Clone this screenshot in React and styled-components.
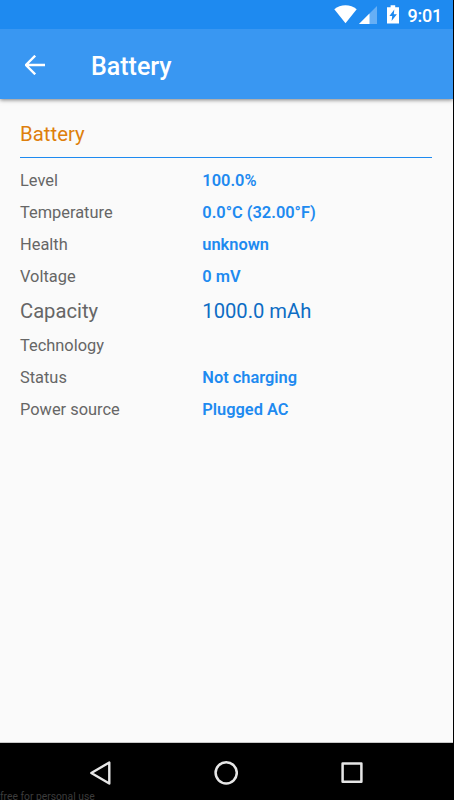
import React from "react"
import styled, { createGlobalStyle } from "styled-components"

const readings = [
  { label: "Level", value: "100.0%" },
  { label: "Temperature", value: "0.0°C (32.00°F)" },
  { label: "Health", value: "unknown" },
  { label: "Voltage", value: "0 mV" },
  { label: "Capacity", value: "1000.0 mAh", large: true },
  { label: "Technology", value: "" },
  { label: "Status", value: "Not charging" },
  { label: "Power source", value: "Plugged AC" },
]

const App = () => (
  <Device>
    <GlobalStyle />
    <Screen>
      <StatusBar>
        <WifiIcon />
        <SignalIcon />
        <BatteryIcon />
        <Clock>9:01</Clock>
      </StatusBar>
      <AppBar>
        <BackButton aria-label="Back">
          <svg width="20" height="20" viewBox="0 0 20 20">
            <path
              d="M10.2 0.7L0.9 10l9.3 9.3M1.5 10H20"
              fill="none"
              stroke="#fff"
              strokeWidth="2.4"
            />
          </svg>
        </BackButton>
        <Title>Battery</Title>
      </AppBar>
      <Content>
        <SectionTitle>Battery</SectionTitle>
        {readings.map(({ label, value, large }) => (
          <Row key={label} $large={large}>
            <Label>{label}</Label>
            <Value $large={large}>{value}</Value>
          </Row>
        ))}
      </Content>
    </Screen>
    <NavBar>
      <NavButton aria-label="Back">
        <svg width="24" height="26" viewBox="0 0 24 26">
          <path
            d="M21.3 2.5v21L3.3 13z"
            fill="none"
            stroke="#e6e6e6"
            strokeWidth="2.4"
            strokeLinejoin="round"
          />
        </svg>
      </NavButton>
      <NavButton aria-label="Home">
        <svg width="24" height="26" viewBox="0 0 24 26">
          <circle
            cx="12.2"
            cy="12.8"
            r="10.6"
            fill="none"
            stroke="#e6e6e6"
            strokeWidth="2.5"
          />
        </svg>
      </NavButton>
      <NavButton aria-label="Recents">
        <svg width="24" height="26" viewBox="0 0 24 26">
          <rect
            x="2.6"
            y="3.6"
            width="18.8"
            height="18.2"
            fill="none"
            stroke="#e6e6e6"
            strokeWidth="2.5"
            strokeLinejoin="round"
          />
        </svg>
      </NavButton>
      <Watermark>free for personal use</Watermark>
    </NavBar>
  </Device>
)

const WifiIcon = () => (
  <svg width="23" height="19" viewBox="0 0 23 19">
    <path d="M11.5 18.2L0.3 4.2C3.4 1.6 7.3 0.3 11.5 0.3s8.1 1.3 11.2 3.9z" fill="#fff" />
  </svg>
)

const SignalIcon = () => (
  <StyledSignal width="18" height="18" viewBox="0 0 18 18">
    <path d="M0 18L18 0v18z" fill="#fff" fillOpacity="0.32" />
    <path d="M0 18L10.5 7.5V18z" fill="#fff" />
  </StyledSignal>
)

const BatteryIcon = () => (
  <StyledBattery width="12" height="19" viewBox="0 0 12 19">
    <path
      d="M3.6 0.3h4.6v1.9H12V18.6H0V2.2h3.6zM7.3 4.5L2.4 11h2.8l-0.6 5L9.9 9.3H6.8z"
      fill="#fff"
      fillRule="evenodd"
    />
  </StyledBattery>
)

const GlobalStyle = createGlobalStyle`
  body {
    margin: 0;
    background: #000;
    font-family: Roboto, "Liberation Sans", sans-serif;
  }

  * {
    box-sizing: border-box;
  }
`

const Device = styled.div`
  display: flex;
  flex-direction: column;
  width: 454px;
  height: 800px;
  overflow: hidden;
  background: #000;
`

const Screen = styled.div`
  display: flex;
  flex-direction: column;
  width: 453px;
  height: 743px;
  background: #fafafa;
  border-bottom: 1px solid #c8c8c8;
`

const StatusBar = styled.div`
  display: flex;
  flex: none;
  align-items: center;
  height: 29px;
  padding-left: 334px;
  background: #1e8af0;
  color: #fff;
`

const StyledSignal = styled.svg`
  margin-left: 2px;
`

const StyledBattery = styled.svg`
  margin-left: 10px;
`

const Clock = styled.span`
  margin-left: 8.5px;
  padding-top: 2px;
  font-size: 18px;
  line-height: 20px;
  font-weight: 500;
  letter-spacing: -0.2px;
`

const AppBar = styled.header`
  display: flex;
  flex: none;
  align-items: center;
  height: 70px;
  padding: 1px 0 0 25px;
  background: #3997f2;
  box-shadow: 0 1px 4px rgba(0, 0, 0, 0.5);
  clip-path: inset(0 0 -8px 0);
  color: #fff;
`

const BackButton = styled.button`
  display: flex;
  padding: 0;
  border: none;
  background: none;
`

const Title = styled.h1`
  margin: 4px 0 0 46px;
  font-size: 25px;
  line-height: 30px;
  font-weight: 500;
`

const Content = styled.main`
  padding: 20px 21px 0 20px;
`

const SectionTitle = styled.h2`
  height: 39px;
  margin: 0 0 6px;
  border-bottom: 1px solid #1e8af0;
  color: #de7f0c;
  font-size: 20.4px;
  line-height: 30px;
  font-weight: 400;
`

const Row = styled.div`
  display: grid;
  grid-template-columns: 182.3px 1fr;
  align-items: center;
  height: ${props => (props.$large ? "37px" : "32px")};
  padding-top: ${props => (props.$large ? "0" : "2px")};
  font-size: ${props => (props.$large ? "20.2px" : "16.4px")};
  line-height: ${props => (props.$large ? "24px" : "20px")};
`

const Label = styled.span`
  color: #666;
`

const Value = styled.span`
  color: ${props => (props.$large ? "#0d6cc4" : "#1e8af0")};
  font-weight: ${props => (props.$large ? 400 : 600)};
`

const NavBar = styled.nav`
  position: relative;
  display: flex;
  align-items: center;
  justify-content: center;
  gap: 102px;
  height: 57px;
  padding: 2px 2px 0 0;
`

const NavButton = styled.button`
  display: flex;
  padding: 0;
  border: none;
  background: none;
`

const Watermark = styled.span`
  position: absolute;
  left: 0;
  bottom: 0;
  color: #3c3c3c;
  font-size: 10.3px;
  line-height: 7px;
`

export default App
